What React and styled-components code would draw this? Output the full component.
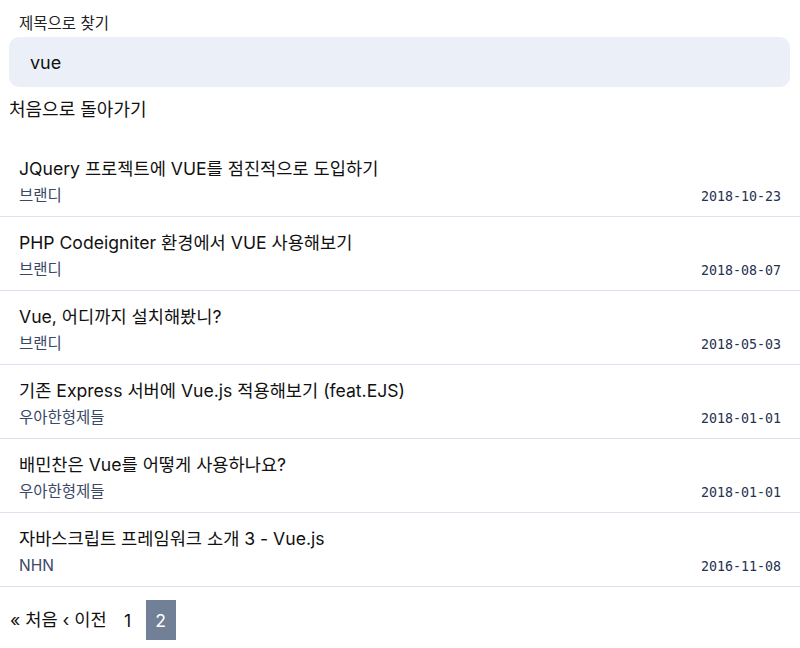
import styled, { createGlobalStyle } from "styled-components";

const posts = [
  { title: "JQuery 프로젝트에 VUE를 점진적으로 도입하기", author: "브랜디", date: "2018-10-23" },
  { title: "PHP Codeigniter 환경에서 VUE 사용해보기", author: "브랜디", date: "2018-08-07" },
  { title: "Vue, 어디까지 설치해봤니?", author: "브랜디", date: "2018-05-03" },
  { title: "기존 Express 서버에 Vue.js 적용해보기 (feat.EJS)", author: "우아한형제들", date: "2018-01-01" },
  { title: "배민찬은 Vue를 어떻게 사용하나요?", author: "우아한형제들", date: "2018-01-01" },
  { title: "자바스크립트 프레임워크 소개 3 - Vue.js", author: "NHN", date: "2016-11-08" },
];

const GlobalStyle = createGlobalStyle`
  body {
    margin: 0;
    background: #fff;
    color: #111;
    font-family: Inter, "Noto Sans CJK KR", sans-serif;
  }
`;

const App = () => {
  return (
    <>
      <GlobalStyle />
      <Page>
        <SearchLabel>제목으로 찾기</SearchLabel>
        <SearchInput defaultValue="vue" />
        <BackLink>처음으로 돌아가기</BackLink>
        <List>
          {posts.map((post) => (
            <Item key={post.title}>
              <Title>{post.title}</Title>
              <Meta>
                <Author>{post.author}</Author>
                <Date>{post.date}</Date>
              </Meta>
            </Item>
          ))}
        </List>
        <Pager>
          <PageLink>« 처음</PageLink>
          <PageLink>‹ 이전</PageLink>
          <PageNum>1</PageNum>
          <PageNum $active>2</PageNum>
        </Pager>
      </Page>
    </>
  );
};

export default App;

const Page = styled.div`
  padding-top: 13px;
`;

const SearchLabel = styled.div`
  padding-left: 19px;
  font-size: 15.5px;
  line-height: 22px;
  color: #222;
`;

const SearchInput = styled.input`
  display: block;
  box-sizing: border-box;
  width: calc(100% - 19px);
  margin: 2px 0 0 9px;
  height: 50px;
  padding: 0 21px;
  border: none;
  border-radius: 10px;
  background: #ebf0f8;
  font-family: Inter, "Noto Sans CJK KR", sans-serif;
  font-size: 18px;
  color: #111;
  outline: none;
`;

const BackLink = styled.div`
  margin-top: 11px;
  padding-left: 9px;
  font-size: 18px;
  line-height: 24px;
  color: #111;
`;

const List = styled.ul`
  list-style: none;
  margin: 21px 0 0;
  padding: 0;
`;

const Item = styled.li`
  height: 74px;
  box-sizing: border-box;
  padding: 13px 19px 0;
  border-bottom: 1px solid #dde3ee;
`;

const Title = styled.div`
  font-size: 17.6px;
  line-height: 25px;
  color: #111;
`;

const Meta = styled.div`
  display: flex;
  justify-content: space-between;
  align-items: center;
  margin-top: 4px;
`;

const Author = styled.span`
  font-size: 15.5px;
  line-height: 22px;
  color: #3a4866;
`;

const Date = styled.span`
  font-family: "DejaVu Sans Mono", monospace;
  font-size: 13.3px;
  color: #263250;
`;

const Pager = styled.div`
  display: flex;
  align-items: center;
  padding: 13px 0 0 10px;
  gap: 5px;
`;

const PageLink = styled.span`
  font-size: 17.6px;
  line-height: 40px;
  color: #111;
`;

const PageNum = styled.span`
  width: 30px;
  height: 40px;
  display: flex;
  align-items: center;
  justify-content: center;
  font-size: 17.6px;
  color: ${(p) => (p.$active ? "#fff" : "#111")};
  background: ${(p) => (p.$active ? "#718096" : "transparent")};
  margin-left: ${(p) => (p.$active ? "-2px" : "1px")};
`;
